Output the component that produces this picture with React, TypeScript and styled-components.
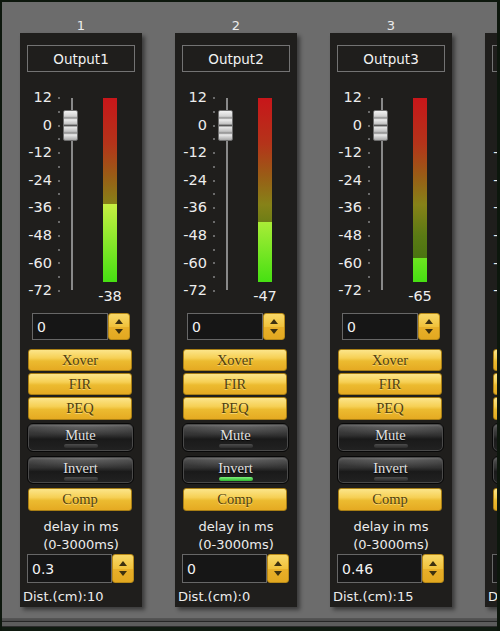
import React from 'react';
import styled, { createGlobalStyle } from 'styled-components';

interface Channel {
  id: number;
  name: string;
  level: number;
  gain: number;
  gainText: string;
  delay: string;
  dist: number;
  inverted: boolean;
}

const channels: Channel[] = [
  { id: 1, name: 'Output1', level: -38, gain: 0, gainText: '0', delay: '0.3', dist: 10, inverted: false },
  { id: 2, name: 'Output2', level: -47, gain: 0, gainText: '0', delay: '0', dist: 0, inverted: true },
  { id: 3, name: 'Output3', level: -65, gain: 0, gainText: '0', delay: '0.46', dist: 15, inverted: false },
  { id: 4, name: 'Output4', level: -72, gain: 0, gainText: '0', delay: '0', dist: 0, inverted: false },
];

const SCALE = [12, 0, -12, -24, -36, -48, -60, -72];
const TICKS = Array.from({ length: 15 }, (_, i) => i);

const GlobalStyle = createGlobalStyle`
  html, body {
    margin: 0;
    padding: 0;
    background: #6c6c6c;
  }
  body {
    font-family: 'DejaVu Sans', sans-serif;
  }
`;

const Frame = styled.div`
  width: 500px;
  height: 631px;
  box-sizing: border-box;
  overflow: hidden;
  background: #6c6c6c;
  border-top: 2px solid #0d170d;
  border-left: 2px solid #0d170d;
  border-right: 3px solid #0d170d;
  display: flex;
  flex-direction: column;
`;

const StripRow = styled.div`
  flex: 1;
  display: flex;
  gap: 33px;
  padding-left: 18px;
  overflow: hidden;
`;

const BottomFrame = styled.div`
  height: 13px;
  flex-shrink: 0;
  background: linear-gradient(
    to bottom,
    #565656 0px,
    #4a4a4a 3px,
    #262626 3px,
    #262626 4px,
    #5c5c5c 4px,
    #5c5c5c 8px,
    #2c2c2c 8px,
    #2c2c2c 9px,
    #0f1a10 9px
  );
`;

const Strip = styled.div`
  width: 122px;
  flex-shrink: 0;
  display: flex;
  flex-direction: column;
`;

const ChannelNumber = styled.div`
  height: 31px;
  box-sizing: border-box;
  padding-top: 16px;
  text-align: center;
  font-size: 13px;
  line-height: 15px;
  color: #ececec;
`;

const Panel = styled.div`
  background: #1f1e1c;
  box-shadow: 3px 3px 4px rgba(0, 0, 0, 0.45);
  padding: 12px 0 2px;
  display: flex;
  flex-direction: column;
`;

const NameBox = styled.div`
  margin: 0 7px;
  height: 27px;
  box-sizing: border-box;
  border: 1px solid #737373;
  display: flex;
  align-items: center;
  justify-content: center;
  color: #f2f2f2;
  font-size: 13.5px;
`;

const FaderArea = styled.div`
  margin-top: 12px;
  height: 221px;
  display: flex;
`;

const Scale = styled.div`
  width: 32px;
  display: flex;
  flex-direction: column;
`;

const ScaleLabel = styled.div`
  height: 27.6px;
  line-height: 27.6px;
  text-align: right;
  font-size: 14.5px;
  color: #ededed;
`;

const TickColumn = styled.div`
  margin-left: 6px;
  width: 2px;
  box-sizing: border-box;
  padding: 13px 0;
  display: flex;
  flex-direction: column;
  justify-content: space-between;
`;

const Tick = styled.div`
  height: 2px;
  background: #6a6a6a;
`;

const Fader = styled.div`
  position: relative;
  width: 24px;

  &::before {
    content: '';
    position: absolute;
    left: 11px;
    width: 2px;
    top: 14px;
    bottom: 15px;
    background: linear-gradient(to right, #6a6a6a, #a8a8a8, #6a6a6a);
  }
`;

const Thumb = styled.div`
  position: absolute;
  left: 3px;
  width: 15px;
  height: 31px;
  box-sizing: border-box;
  border: 1px solid #6e6e6e;
  border-radius: 2px;
  background: linear-gradient(
    to bottom,
    #f2f2f2 0%,
    #d2d2d2 18%,
    #8e8e8e 24%,
    #ececec 30%,
    #c4c4c4 44%,
    #585858 50%,
    #e6e6e6 56%,
    #c2c2c2 70%,
    #8a8a8a 76%,
    #ebebeb 82%,
    #a8a8a8 100%
  );
`;

const MeterColumn = styled.div`
  margin-left: 11px;
  width: 30px;
  padding-top: 14px;
  display: flex;
  flex-direction: column;
  align-items: center;
`;

const Meter = styled.div`
  width: 14px;
  height: 184px;
  display: flex;
  flex-direction: column;
  justify-content: flex-end;
  background: linear-gradient(
    to bottom,
    #c8161a 0%,
    #b4341a 25%,
    #9a5c16 42%,
    #868218 58%,
    #5a7a14 75%,
    #3a6c0e 100%
  );
`;

const MeterLit = styled.div`
  width: 100%;
  background: linear-gradient(
    to bottom,
    #f0ff70 0%,
    #c6f042 58%,
    #46e012 100%
  );
  background-size: 100% 184px;
  background-position: bottom;
`;

const MeterValue = styled.div`
  margin-top: 6px;
  font-size: 14.5px;
  line-height: 16px;
  color: #eeeeee;
  white-space: nowrap;
`;

const SpinBox = styled.div<{ $left: number; $height: number; $top: number }>`
  display: flex;
  margin: ${({ $top }) => $top}px 0 0 ${({ $left }) => $left}px;
  height: ${({ $height }) => $height}px;
`;

const SpinField = styled.div<{ $width: number }>`
  width: ${({ $width }) => $width}px;
  box-sizing: border-box;
  border: 1px solid #676767;
  background: #161616;
  color: #f2f2f2;
  font-size: 14px;
  padding-left: 4px;
  display: flex;
  align-items: center;
`;

const SpinButtons = styled.div`
  width: 22px;
  box-sizing: border-box;
  border-radius: 3px;
  border: 1px solid #b88a18;
  background: linear-gradient(to bottom, #f8d868 0%, #f0c23c 50%, #e8b02a 52%, #e2a820 100%);
  display: flex;
  flex-direction: column;
  align-items: center;
  justify-content: space-evenly;
`;

const YellowButton = styled.div<{ $height: number; $top: number }>`
  width: 104px;
  height: ${({ $height }) => $height}px;
  margin: ${({ $top }) => $top}px 0 0 8px;
  box-sizing: border-box;
  border-radius: 3px;
  border: 1px solid #a87e14;
  background: linear-gradient(
    to bottom,
    #fce58a 0%,
    #f6d055 40%,
    #ecbb30 55%,
    #e5aa22 100%
  );
  display: flex;
  align-items: center;
  justify-content: center;
  font-family: 'Liberation Serif', serif;
  font-size: 14.5px;
  color: #4f3e10;
  text-shadow: 0 1px 0 rgba(255, 238, 170, 0.6);
`;

const DarkButton = styled.div<{ $height: number; $top: number }>`
  width: 107px;
  height: ${({ $height }) => $height}px;
  margin: ${({ $top }) => $top}px 0 0 7px;
  box-sizing: border-box;
  border-radius: 6px;
  border: 1px solid #080808;
  box-shadow: inset 0 0 0 1px #4a4a4a, inset 0 2px 2px rgba(255, 255, 255, 0.12);
  background:
    radial-gradient(ellipse 70% 45% at 55% 0%, rgba(255, 255, 255, 0.18), rgba(255, 255, 255, 0) 100%),
    linear-gradient(
      to bottom,
      #4c4c4c 0%,
      #333333 40%,
      #1a1a1a 56%,
      #222222 100%
    );
  padding-top: 3px;
  display: flex;
  flex-direction: column;
  align-items: center;
`;

const DarkLabel = styled.div`
  font-family: 'Liberation Serif', serif;
  font-size: 14.5px;
  line-height: 16px;
  color: #e2e2e2;
  text-shadow: 0 1px 1px #000;
`;

const Led = styled.div<{ $on: boolean }>`
  margin-top: 1px;
  width: 34px;
  height: 4px;
  border-radius: 2px;
  background: ${({ $on }) =>
    $on
      ? 'linear-gradient(to bottom, #7cf07c, #2fb62f)'
      : 'linear-gradient(to bottom, #4c4c4c, #2c2c2c)'};
`;

const DelayLabel = styled.div`
  margin-top: 7px;
  text-align: center;
  font-size: 13px;
  line-height: 18px;
  color: #ececec;
`;

const Dist = styled.div`
  margin-top: 6px;
  padding-left: 3px;
  font-size: 13px;
  line-height: 16px;
  color: #ececec;
  white-space: nowrap;
`;

const Arrow = ({ down }: { down?: boolean }) => (
  <svg width="8" height="5" viewBox="0 0 8 5">
    <polygon points={down ? '0,0 8,0 4,5' : '4,0 8,5 0,5'} fill="#3d3110" />
  </svg>
);

const Spinner = ({ value, left, top, height, width }: { value: string; left: number; top: number; height: number; width: number }) => (
  <SpinBox $left={left} $top={top} $height={height}>
    <SpinField $width={width}>{value}</SpinField>
    <SpinButtons>
      <Arrow />
      <Arrow down />
    </SpinButtons>
  </SpinBox>
);

const gainToTop = (gain: number) => 14 + (12 - gain) * 2.298 - 15.5;
const levelToPct = (level: number) => Math.max(0, Math.min(100, ((level + 77) / 92) * 100));

const ChannelStrip = ({ ch }: { ch: Channel }) => (
  <Strip>
    <ChannelNumber>{ch.id}</ChannelNumber>
    <Panel>
      <NameBox>{ch.name}</NameBox>
      <FaderArea>
        <Scale>
          {SCALE.map((s) => (
            <ScaleLabel key={s}>{s}</ScaleLabel>
          ))}
        </Scale>
        <TickColumn>
          {TICKS.map((t) => (
            <Tick key={t} />
          ))}
        </TickColumn>
        <Fader>
          <Thumb style={{ top: gainToTop(ch.gain) }} />
        </Fader>
        <MeterColumn>
          <Meter>
            <MeterLit style={{ height: `${levelToPct(ch.level)}%` }} />
          </Meter>
          <MeterValue>{ch.level}</MeterValue>
        </MeterColumn>
      </FaderArea>
      <Spinner value={ch.gainText} left={12} top={8} height={27} width={76} />
      <YellowButton $top={9} $height={22}>Xover</YellowButton>
      <YellowButton $top={2} $height={22}>FIR</YellowButton>
      <YellowButton $top={2} $height={23}>PEQ</YellowButton>
      <DarkButton $top={3} $height={29}>
        <DarkLabel>Mute</DarkLabel>
        <Led $on={false} />
      </DarkButton>
      <DarkButton $top={4} $height={28}>
        <DarkLabel>Invert</DarkLabel>
        <Led $on={ch.inverted} />
      </DarkButton>
      <YellowButton $top={4} $height={23}>Comp</YellowButton>
      <DelayLabel>
        delay in ms
        <br />
        (0-3000ms)
      </DelayLabel>
      <Spinner value={ch.delay} left={7} top={0} height={29} width={85} />
      <Dist>Dist.(cm):{ch.dist}</Dist>
    </Panel>
  </Strip>
);

const App = () => (
  <>
    <GlobalStyle />
    <Frame>
      <StripRow>
        {channels.map((ch) => (
          <ChannelStrip key={ch.id} ch={ch} />
        ))}
      </StripRow>
      <BottomFrame />
    </Frame>
  </>
);

export default App;
